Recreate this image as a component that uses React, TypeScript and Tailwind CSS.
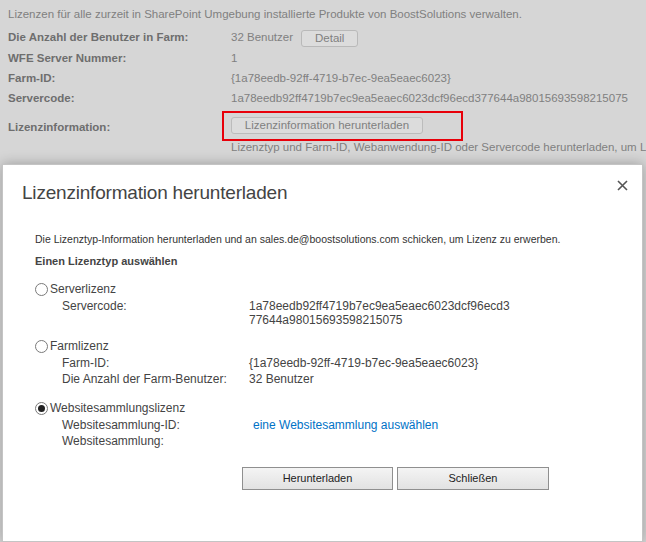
const PAGE = "font-['Liberation_Sans','Arial',sans-serif]";
const DLG = "font-['Liberation_Sans','Arial',sans-serif]";

function Radio({ checked }: { checked?: boolean }) {
  return (
    <span className="flex h-[13px] w-[13px] shrink-0 items-center justify-center rounded-full border border-[#7a7a7a] bg-white">
      {checked && <span className="h-[7px] w-[7px] rounded-full bg-[#222]" />}
    </span>
  );
}

function Option({
  title,
  checked,
  rows,
}: {
  title: string;
  checked?: boolean;
  rows: { label: string; value?: React.ReactNode }[];
}) {
  return (
    <div>
      <div className="flex h-[18px] items-center gap-[2px]">
        <Radio checked={checked} />
        <span className="text-[12px] text-[#444]">{title}</span>
      </div>
      <div className="pl-[27px]">
        {rows.map((r) => (
          <div key={r.label} className="grid grid-cols-[187px_1fr] text-[12px] leading-[16px] text-[#444]">
            <span>{r.label}</span>
            <span>{r.value}</span>
          </div>
        ))}
      </div>
    </div>
  );
}

export default function App() {
  const rows = [
    { label: "WFE Server Nummer:", value: "1" },
    { label: "Farm-ID:", value: "{1a78eedb-92ff-4719-b7ec-9ea5eaec6023}" },
    { label: "Servercode:", value: "1a78eedb92ff4719b7ec9ea5eaec6023dcf96ecd377644a98015693598215075" },
  ];

  return (
    <div className="relative h-[542px] w-[646px] overflow-hidden bg-[#d6d6d6]">
      {/* page behind the modal */}
      <div className={`px-[8px] pt-[5px] text-[11.5px] text-[#808080] ${PAGE}`}>
        <p className="whitespace-nowrap leading-[18px]">
          Lizenzen für alle zurzeit in SharePoint Umgebung installierte Produkte von BoostSolutions verwalten.
        </p>
        <div className="mt-[5px] grid h-[20px] grid-cols-[223px_1fr] items-center">
          <span className="font-bold text-[#6e6e6e]">Die Anzahl der Benutzer in Farm:</span>
          <div className="flex items-center gap-[8px]">
            <span>32 Benutzer</span>
            <span className="rounded-[3px] border border-[#b9b9b9] bg-[#dcdcdc] px-[13px] leading-[15px]">Detail</span>
          </div>
        </div>
        <div>
          {rows.map((r) => (
            <div key={r.label} className="grid grid-cols-[223px_1fr] leading-[20px]">
              <span className="font-bold text-[#6e6e6e]">{r.label}</span>
              <span className="whitespace-nowrap">{r.value}</span>
            </div>
          ))}
        </div>
        <div className="mt-[3px] grid grid-cols-[223px_1fr]">
          <span className="pt-[8px] font-bold text-[#6e6e6e]">Lizenzinformation:</span>
          <div className="whitespace-nowrap">
            <div className="-ml-[9px] w-[241px] border-2 border-[#e8000a] px-[7px] pt-[4px] pb-[5px]">
              <span className="inline-block w-[192px] rounded-[3px] border border-[#bcbcbc] bg-[#dcdcdc] text-center leading-[15px]">
                Lizenzinformation herunterladen
              </span>
            </div>
            <p className="-mt-[1px] leading-[14px]">
              Lizenztyp und Farm-ID, Webanwendung-ID oder Servercode herunterladen, um Lizenz zu erwerben.
            </p>
          </div>
        </div>
      </div>

      {/* modal dialog */}
      <div
        className={`absolute left-[2px] top-[164px] flex h-[378px] w-[641px] flex-col border border-[#c4c4c4] bg-white shadow-[0_0_12px_rgba(0,0,0,0.28)] ${DLG}`}
      >
        <div className="flex items-start justify-between pl-[19px] pr-[14px] pt-[15px]">
          <h1 className="text-[19px] leading-[26px] tracking-[-0.2px] text-[#444]">Lizenzinformation herunterladen</h1>
          <svg width="11" height="11" viewBox="0 0 11 11">
            <path d="M1 1L10 10M10 1L1 10" stroke="#555" strokeWidth="1.6" />
          </svg>
        </div>

        <div className="pl-[32px] pt-[26px]">
          <p className="text-[10.5px] leading-[14px] text-[#333]">
            Die Lizenztyp-Information herunterladen und an sales.de@boostsolutions.com schicken, um Lizenz zu erwerben.
          </p>
          <p className="mt-[8px] text-[11px] font-bold leading-[14px] text-[#444]">Einen Lizenztyp auswählen</p>

          <div className="mt-[12px] flex flex-col gap-[12px]">
            <Option
              title="Serverlizenz"
              rows={[
                {
                  label: "Servercode:",
                  value: (
                    <span className="-mb-[2px] block pt-[1px] leading-[14px]">
                      1a78eedb92ff4719b7ec9ea5eaec6023dcf96ecd3
                      <br />
                      77644a98015693598215075
                    </span>
                  ),
                },
              ]}
            />
            <Option
              title="Farmlizenz"
              rows={[
                { label: "Farm-ID:", value: "{1a78eedb-92ff-4719-b7ec-9ea5eaec6023}" },
                { label: "Die Anzahl der Farm-Benutzer:", value: "32 Benutzer" },
              ]}
            />
            <Option
              title="Websitesammlungslizenz"
              checked
              rows={[
                {
                  label: "Websitesammlung-ID:",
                  value: <span className="pl-[4px] text-[#0072c6]">eine Websitesammlung auswählen</span>,
                },
                { label: "Websitesammlung:" },
              ]}
            />
          </div>

          <div className="mt-[18px] flex gap-[4px] pl-[207px]">
            <button className="h-[23px] w-[151px] border border-[#8f8f8f] bg-gradient-to-b from-[#f4f4f4] to-[#e2e2e2] text-[11px] text-[#222]">
              Herunterladen
            </button>
            <button className="h-[23px] w-[152px] border border-[#8f8f8f] bg-gradient-to-b from-[#f4f4f4] to-[#e2e2e2] text-[11px] text-[#222]">
              Schließen
            </button>
          </div>
        </div>
      </div>
    </div>
  );
}
